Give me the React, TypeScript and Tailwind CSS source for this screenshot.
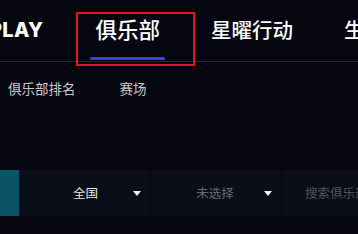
import React from "react";

const font = { fontFamily: '"Noto Sans CJK SC", "Noto Sans", sans-serif' };

const Caret = () => (
  <svg width="8" height="5" viewBox="0 0 8 5" className="shrink-0">
    <path d="M0 0h8L4 5z" fill="#f2f2f4" />
  </svg>
);

export default function App() {
  return (
    <div
      className="w-[358px] h-[234px] bg-[#05060f] overflow-hidden relative"
      style={font}
    >
      {/* top nav */}
      <div className="h-[62px] border-b border-[#262833] flex items-center">
        <div className="flex items-center gap-[51px] ml-[-11px] pb-[2px] shrink-0 whitespace-nowrap">
          <span className="shrink-0 text-white text-[20px] font-extrabold tracking-[0.3px] font-['Inter',sans-serif]">
            PLAY
          </span>
          <div className="shrink-0 relative h-[61px] flex items-center ml-[1px]">
            <span className="text-white text-[21.5px] font-medium">俱乐部</span>
            <div className="absolute bottom-0 left-[-5px] right-[-5px] h-[3px] bg-[#3346dc] rounded-full" />
          </div>
          <span className="shrink-0 text-white text-[20.5px] font-medium">星曜行动</span>
          <span className="shrink-0 text-white text-[20.5px] font-medium">生活</span>
        </div>
      </div>

      {/* annotation box */}
      <div className="absolute left-[76px] top-[12px] w-[119px] h-[54px] border-2 border-[#e0141b]" />

      {/* sub nav */}
      <div className="flex items-center gap-[44px] pl-[8px] mt-[16px] text-[13.5px] text-[#c9cad0] whitespace-nowrap">
        <span>俱乐部排名</span>
        <span>赛场</span>
      </div>

      {/* filters */}
      <div className="absolute left-0 right-0 top-[170px] h-[46px] flex gap-px bg-[#04060c]">
        <div className="w-[19px] shrink-0 bg-[#0b5468]" />
        <div className="w-[130px] shrink-0 bg-[#0a0e18] flex items-center relative">
          <span className="flex-1 text-center text-[12.5px] text-[#e4e5ea] pl-[1px]">全国</span>
          <div className="absolute right-[9px] top-[21px]">
            <Caret />
          </div>
        </div>
        <div className="w-[130px] shrink-0 bg-[#0a0e18] flex items-center relative">
          <span className="flex-1 text-center text-[12.5px] text-[#666a76] pr-[2px]">未选择</span>
          <div className="absolute right-[9px] top-[21px]">
            <Caret />
          </div>
        </div>
        <div className="flex-1 bg-[#0a0e18] flex items-center pl-[23px]">
          <span className="text-[12.5px] text-[#50545f] whitespace-nowrap">搜索俱乐部</span>
        </div>
      </div>
    </div>
  );
}
